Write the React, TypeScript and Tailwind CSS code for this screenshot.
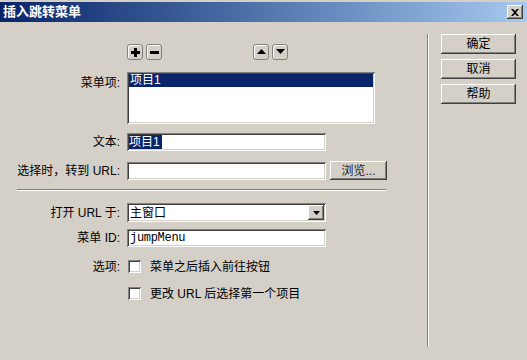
import React from "react";

const raised =
  "shadow-[inset_-1px_-1px_#404040,inset_1px_1px_#ffffff,inset_-2px_-2px_#808080,inset_2px_2px_#d4d0c8]";
const sunken =
  "shadow-[inset_1px_1px_#808080,inset_-1px_-1px_#ffffff,inset_2px_2px_#404040,inset_-2px_-2px_#d4d0c8]";

const font = { fontFamily: '"Liberation Sans", "Noto Sans CJK SC", sans-serif' };

function SmallBtn({ children }: { children: React.ReactNode }) {
  return (
    <div className="w-[16px] h-[16px] rounded-[3px] border border-[#808080] bg-[#d4d0c8] shadow-[inset_1px_1px_#ffffff] flex items-center justify-center">
      {children}
    </div>
  );
}

function Label({ children }: { children: React.ReactNode }) {
  return (
    <div className="w-[127px] pr-[7px] text-right text-[12px] leading-[14px] text-black shrink-0">
      {children}
    </div>
  );
}

function Checkbox() {
  return <div className={`w-[13px] h-[13px] bg-white ${sunken}`} />;
}

export default function App() {
  return (
    <div className="w-[527px] h-[360px] bg-[#d4d0c8] flex flex-col overflow-hidden" style={font}>
      {/* title bar */}
      <div className="pt-[2px] bg-[#d4d0c8]">
        <div className="h-[20px] bg-gradient-to-r from-[#0a246a] to-[#a6caf0] flex items-center justify-between pl-[3px] pr-[4px]">
          <span className="text-white font-bold text-[13px] leading-[16px] tracking-[0px]">插入跳转菜单</span>
          <div className={`w-[16px] h-[14px] bg-[#d4d0c8] ${raised} flex items-center justify-center`}>
            <svg width="8" height="7" viewBox="0 0 8 7">
              <path d="M0 0h2l2 2 2-2h2L5 3.5 8 7H6L4 5 2 7H0l3-3.5z" fill="#000" />
            </svg>
          </div>
        </div>
      </div>

      {/* body */}
      <div className="flex flex-1">
        {/* left form */}
        <div className="w-[427px] flex flex-col">
          {/* +/- and arrows */}
          <div className="flex mt-[22px] h-[16px] pl-[127px]">
            <div className="flex gap-[3px]">
              <SmallBtn>
                <svg width="9" height="9" viewBox="0 0 9 9">
                  <path d="M3 0h3v3h3v3H6v3H3V6H0V3h3z" fill="#000" />
                </svg>
              </SmallBtn>
              <SmallBtn>
                <svg width="9" height="9" viewBox="0 0 9 9">
                  <path d="M0 3h9v3H0z" fill="#000" />
                </svg>
              </SmallBtn>
            </div>
            <div className="flex gap-[3px] ml-[91px]">
              <SmallBtn>
                <svg width="9" height="6" viewBox="0 0 9 6">
                  <path d="M4.5 0L9 5H0z" fill="#000" />
                </svg>
              </SmallBtn>
              <SmallBtn>
                <svg width="9" height="6" viewBox="0 0 9 6">
                  <path d="M0 0h9L4.5 5z" fill="#000" />
                </svg>
              </SmallBtn>
            </div>
          </div>

          {/* list */}
          <div className="flex mt-[12px]">
            <Label>
              <div className="pt-[4px]">菜单项:</div>
            </Label>
            <div className={`w-[248px] h-[52px] bg-white ${sunken} p-[2px]`}>
              <div className="h-[13px] bg-[#0a246a] text-white text-[12px] leading-[13px] pl-[1px]">项目1</div>
            </div>
          </div>

          {/* text */}
          <div className="flex items-center mt-[9px]">
            <Label>文本:</Label>
            <div className={`w-[199px] h-[18px] bg-white ${sunken} flex items-center pl-[2px]`}>
              <span className="bg-[#0a246a] text-white text-[12px] leading-[14px] pr-[2px]">项目1</span>
            </div>
          </div>

          {/* url */}
          <div className="flex items-center mt-[10px]">
            <div className="w-[127px] pr-[7px] text-right text-[12px] leading-[14px] text-black shrink-0 whitespace-nowrap">
              选择时，转到 URL:
            </div>
            <div className={`w-[199px] h-[18px] bg-white ${sunken}`} />
            <div
              className={`ml-[4px] w-[57px] h-[19px] bg-[#d4d0c8] ${raised} flex items-center justify-center text-[12px] text-[#222]`}
            >
              浏览...
            </div>
          </div>

          {/* separator */}
          <div className="mt-[9px] ml-[17px] w-[369px] border-t border-t-[#808080] border-b border-b-white" />

          {/* open url in */}
          <div className="flex items-center mt-[12px]">
            <Label>打开 URL 于:</Label>
            <div className={`w-[199px] h-[19px] bg-white ${sunken} flex items-center justify-between pl-[3px] pr-[2px]`}>
              <span className="text-[12px] leading-[14px] text-black">主窗口</span>
              <div className={`w-[16px] h-[15px] bg-[#d4d0c8] ${raised} flex items-center justify-center`}>
                <svg width="7" height="4" viewBox="0 0 7 4">
                  <path d="M0 0h7L3.5 4z" fill="#000" />
                </svg>
              </div>
            </div>
          </div>

          {/* menu id */}
          <div className="flex items-center mt-[7px]">
            <Label>菜单 ID:</Label>
            <div className={`w-[199px] h-[18px] bg-white ${sunken} flex items-center pl-[3px]`}>
              <span
                className="text-[12px] leading-[14px] text-black"
                style={{ fontFamily: '"Liberation Mono", monospace', letterSpacing: "-0.3px" }}
              >
                jumpMenu
              </span>
            </div>
          </div>

          {/* options */}
          <div className="flex items-center mt-[13px] h-[13px]">
            <Label>选项:</Label>
            <div className="ml-[1px]">
              <Checkbox />
            </div>
            <span className="ml-[9px] text-[12px] leading-[14px] text-black">菜单之后插入前往按钮</span>
          </div>
          <div className="flex items-center mt-[14px] h-[13px]">
            <div className="w-[127px] shrink-0" />
            <div className="ml-[1px]">
              <Checkbox />
            </div>
            <span className="ml-[9px] text-[12px] leading-[14px] text-black">更改 URL 后选择第一个项目</span>
          </div>
        </div>

        {/* vertical separator */}
        <div className="mt-[12px] h-[313px] w-[2px] border-l border-l-[#808080] border-r border-r-white" />

        {/* buttons */}
        <div className="flex flex-col gap-[5px] pl-[12px] pt-[12px]">
          {["确定", "取消", "帮助"].map((t) => (
            <div
              key={t}
              className={`w-[75px] h-[20px] bg-[#d4d0c8] ${raised} flex items-center justify-center text-[12px] text-black`}
            >
              {t}
            </div>
          ))}
        </div>
      </div>
    </div>
  );
}
